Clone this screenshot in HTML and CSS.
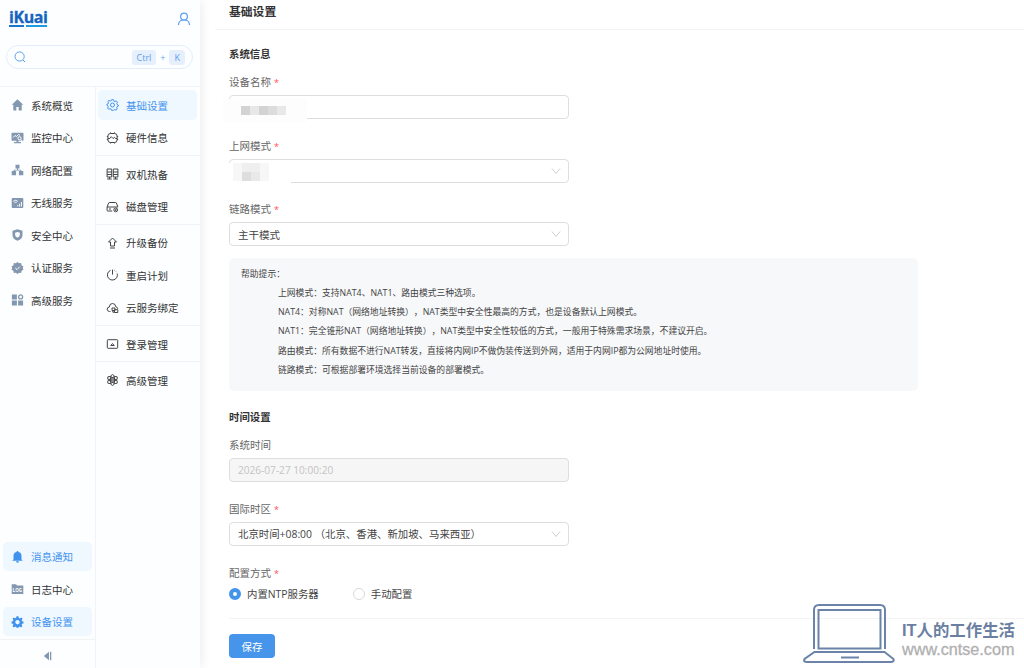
FILE: index.html
```html
<!DOCTYPE html>
<html lang="zh-CN">
<head>
    <meta charset="UTF-8">
    <meta name="viewport" content="width=device-width, initial-scale=1.0">
    <title>基础设置</title>
    <link rel="stylesheet" href="styles.css">
</head>
<body>
    <aside class="sidebar">
        <div class="side-head">
            <div class="brand">
                <div class="logo">iKuai</div>
                <svg class="user" viewBox="0 0 14 14"><circle cx="7" cy="4.6" r="3.4"/><path d="M1.5 13c0-3 2-5 5.500-5s5.500 2 5.500 5"/></svg>
            </div>
            <div class="search">
                <svg viewBox="0 0 12 12"><circle cx="5.600" cy="5.500" r="4.600"/><path d="M9 9l2 2"/></svg>
                <kbd>Ctrl</kbd><span>+</span><kbd>K</kbd>
            </div>
        </div>
        <div class="side-body">
            <nav class="menu main-menu">
                <a class="item"><svg viewBox="0 0 12 12"><path d="M6 .3L.3 5.800h1.500V11.500h3V8h2.400v3.500h3V5.800h1.500z"/></svg>系统概览</a>
                <a class="item"><svg viewBox="0 0 12 12"><path d="M.8.800h10.400q.8 0 .8.800v6.400q0 .8-.8.800H7v1.200h2.500v1.200h-7V10H5V8.800H.8Q0 8.800 0 8V1.600Q0 .8.800.8z"/><path class="cut" d="M1.500 5.500l2-2 1.500 1 2-2 1.500.8"/><circle class="cut" cx="8" cy="6.200" r="1.600"/><path class="cut" d="M9.200 7.500l1.800 1.800"/></svg>监控中心</a>
                <a class="item"><svg viewBox="0 0 12 12"><path d="M4 .7h4v3.800H4zM.2 7h4.400v4.200H.2zM7.400 7h4.400v4.200H7.400zM5.500 4.500h1v1.200h3.300V7h-1v-.4H3.200V7h-1V5.700h3.300z"/></svg>网络配置</a>
                <a class="item"><svg viewBox="0 0 12 12"><rect x=".2" y="1" width="11.600" height="10" rx="1"/><path class="cut" d="M1.800 4.300q2.200-2 4.400 0M3 5.700q1-.9 2 0M6.300 9.500V8M8.100 9.500V6.800M9.900 9.500V5"/></svg>无线服务</a>
                <a class="item"><svg viewBox="0 0 12 12"><path d="M6 .3l5 1.500v4.200q0 4-5 5.700Q1 10 1 6V1.800z"/><path class="hole" d="M6 3l2.400.800v2q0 2-2.400 3-2.400-1-2.400-3v-2z"/></svg>安全中心</a>
                <a class="item"><svg viewBox="0 0 12 12"><path d="M6 0l1.600 1.300 2.100-.2.300 2.100L12 4.400 11.200 6l.8 1.800-1.900 1-.4 2.100-2.100-.2L6 12l-1.600-1.300-2.100.2-.4-2.100L0 7.800.8 6 0 4.400l2-1.200.3-2.100 2.100.2z"/><path class="cut" d="M3.800 6l1.700 1.600 2.800-3"/></svg>认证服务</a>
                <a class="item"><svg viewBox="0 0 12 12"><path d="M.4.400h5v5h-5zM.4 6.600h5v5h-5zM6.600 6.600h5v5h-5z"/><circle class="ring" cx="9.100" cy="2.900" r="2"/></svg>高级服务</a>
                <div class="spacer"></div>
                <a class="item active"><svg viewBox="0 0 12 12"><path d="M6 0q1 0 1 1 3 .7 3 4v3.500l1.300 1.300H.7L2 8.500V5q0-3.300 3-4 0-1 1-1zM4.500 10.300h3Q7.300 11.800 6 11.800t-1.500-1.500z"/></svg>消息通知</a>
                <a class="item"><svg viewBox="0 0 12 12"><path d="M.2 1.200h4.300l1 1.300h6.300v8.600H.2z"/><text x="1.100" y="9">LOG</text></svg>日志中心</a>
                <a class="item active"><svg viewBox="0 0 12 12"><path fill-rule="evenodd" d="M5 .3h2l.3 1.600 1.100.5L9.800 1.500l1.300 1.300-.9 1.400.4 1.100 1.400.2v1.900l-1.400.3-.5 1.100.8 1.300-1.300 1.300-1.300-.8-1 .4L7 11.700H5L4.700 11 3.700 10.600l-1.400.8L1 10.100l.9-1.300-.5-1.100L0 7.400V5.500l1.400-.3.500-1.100L1 2.700l1.300-1.300 1.300.9 1.100-.5zM6 4a2.200 2.200 0 1 0 .01 0z"/></svg>设备设置</a>
                <div class="collapse"><svg viewBox="0 0 10 10"><path d="M6 .800v8.400L.8 5zM7 .8h1.300v8.400H7z"/></svg></div>
            </nav>
            <nav class="menu sub-menu">
                <div class="group">
                    <a class="item active"><svg viewBox="0 0 12 12"><path d="M5 .7h2l.4 1.400 1 .5 1.400-.7 1.200 1.300-.7 1.300.4 1 1 .4v1.300l-1.200.5-.4 1 .7 1.300-1.300 1.200-1.200-.7-1 .4L7 11.300H5L4.600 10l-1-.4-1.400.7L1.100 9l.7-1.300-.4-1-1-.4V5.200l1.200-.4.400-1-.7-1.300L2.500 1.400l1.200.7 1-.4z"/><circle cx="6" cy="6" r="2"/></svg>基础设置</a>
                    <a class="item"><svg viewBox="0 0 12 12"><rect x="1.400" y="1.500" width="9.200" height="9" rx="2.500"/><path d="M4 .4v1M8 .4v1M4 10.500v1M8 10.500v1M.3 4.500h1M.3 7.500h1M10.700 4.500h1M10.700 7.500h1M1.500 6.500h1.800l1.500-1.800 1.800 1.800L8 5.300l1 1.200h1.600"/></svg>硬件信息</a>
                </div>
                <div class="group">
                    <a class="item"><svg viewBox="0 0 12 12"><path d="M.6 1h4.600v8H.6zM6.800 1h4.600v8H6.800zM.6 4h4.600M.6 6.500h4.600M6.800 4h4.600M6.800 6.500h4.600M3 9v2M9 9v2M.6 11h4.600M6.800 11h4.600"/></svg>双机热备</a>
                    <a class="item"><svg viewBox="0 0 12 12"><path d="M.6 6l1.500-4q.2-.5.800-.5h6.200q.6 0 .8.500L11.400 6M.6 6h10.800M.6 6v3.500q0 .5.500.5h4.600M2.500 8h2"/><circle cx="9.200" cy="8.900" r="1.900"/><circle cx="9.200" cy="8.900" r=".6"/></svg>磁盘管理</a>
                </div>
                <div class="group">
                    <a class="item"><svg viewBox="0 0 12 12"><path d="M6 1L2 5h2v4h4V5h2zM3.500 11h5"/></svg>升级备份</a>
                    <a class="item"><svg viewBox="0 0 12 12"><path d="M4 1.400a5 5 0 1 0 6.700 3.200M6 .6v5M8 1.300l.5.300M9.600 2.600l.4.500"/></svg>重启计划</a>
                    <a class="item"><svg viewBox="0 0 12 12"><path d="M4 9.500H3Q.7 9.300.7 7.200T2.800 5Q3 1.500 6 1.500t3.300 3.300q1.800.3 2 2"/><path d="M5.500 6h3v2.500h-3zM8 7.700h3.300v2.800H8zM6.300 8.500v1.700H8"/></svg>云服务绑定</a>
                </div>
                <div class="group">
                    <a class="item"><svg viewBox="0 0 12 12"><rect x=".8" y="1.700" width="10.400" height="8.600" rx=".8"/><path d="M4.300 7.500l1.700-2 1.700 2z"/></svg>登录管理</a>
                </div>
                <div class="group">
                    <a class="item"><svg viewBox="0 0 12 12"><ellipse cx="6" cy="6" rx="2.100" ry="5.400"/><ellipse cx="6" cy="6" rx="2.100" ry="5.400" transform="rotate(60 6 6)"/><ellipse cx="6" cy="6" rx="2.100" ry="5.400" transform="rotate(120 6 6)"/><circle cx="6" cy="6" r="1"/></svg>高级管理</a>
                </div>
            </nav>
        </div>
    </aside>

    <main class="content">
        <h1>基础设置</h1>
        <form>
            <h2>系统信息</h2>
            <div class="field">
                <label class="required">设备名称</label>
                <div class="control masked">
                    <div class="mask mask-name"><i></i><i></i><i></i><i></i><i></i></div>
                </div>
            </div>
            <div class="field">
                <label class="required">上网模式</label>
                <div class="control masked">
                    <div class="mask mask-mode"><i></i><i></i><i></i><i></i><i></i><i></i><i></i><i></i></div>
                    <svg class="arrow" viewBox="0 0 10 8"><path d="M1 1.500l4 5 4-5"/></svg>
                </div>
            </div>
            <div class="field">
                <label class="required">链路模式</label>
                <div class="control">主干模式<svg class="arrow" viewBox="0 0 10 8"><path d="M1 1.500l4 5 4-5"/></svg></div>
            </div>
            <div class="help">
                <p>帮助提示：</p>
                <ul>
                    <li>上网模式：支持NAT4、NAT1、路由模式三种选项。</li>
                    <li>NAT4：对称NAT（网络地址转换），NAT类型中安全性最高的方式，也是设备默认上网模式。</li>
                    <li>NAT1：完全锥形NAT（网络地址转换），NAT类型中安全性较低的方式，一般用于特殊需求场景，不建议开启。</li>
                    <li>路由模式：所有数据不进行NAT转发，直接将内网IP不做伪装传送到外网，适用于内网IP都为公网地址时使用。</li>
                    <li>链路模式：可根据部署环境选择当前设备的部署模式。</li>
                </ul>
            </div>
            <h2>时间设置</h2>
            <div class="field">
                <label>系统时间</label>
                <div class="control disabled">2026-07-27 10:00:20</div>
            </div>
            <div class="field">
                <label class="required">国际时区</label>
                <div class="control"><span class="zone">北京时间+08:00 （北京、香港、新加坡、马来西亚）</span><svg class="arrow" viewBox="0 0 10 8"><path d="M1 1.500l4 5 4-5"/></svg></div>
            </div>
            <div class="field">
                <label class="required">配置方式</label>
                <div class="radios">
                    <span class="radio checked">内置NTP服务器</span>
                    <span class="radio">手动配置</span>
                </div>
            </div>
            <div class="actions">
                <button type="button">保存</button>
            </div>
        </form>
    </main>

    <div class="watermark">
        <svg viewBox="0 0 92 60">
            <path d="M11 45V6q0-5 5-5h61q5 0 5 5v39"/>
            <path d="M15.500 6h62v38.500h-62z"/>
            <path d="M11.500 48h70l9 7q1 3-3 3H4q-4 0-2.500-3z"/>
            <path d="M38 53.500h18"/>
        </svg>
        <div>
            <div class="wm-name">IT人的工作生活</div>
            <div class="wm-url">www.cntse.com</div>
        </div>
    </div>
</body>
</html>
```

FILE: styles.css
```css
*,
*::before,
*::after {
    box-sizing: border-box;
}

body {
    margin: 0;
    height: 668px;
    display: flex;
    overflow: hidden;
    position: relative;
    background: #fff;
    color: #444;
    font-family: "Open Sans", "Noto Sans CJK SC", sans-serif;
    font-size: 10.5px;
    text-spacing-trim: space-all;
}

h1, h2, p, ul {
    margin: 0;
    padding: 0;
}

/* sidebar */
.sidebar {
    width: 200px;
    flex: none;
    display: flex;
    flex-direction: column;
    background: #fcfeff;
    box-shadow: 2px 0 10px rgba(0, 0, 0, 0.07);
}

.side-head {
    height: 87px;
    border-bottom: 1px solid #f1f4f7;
}

.brand {
    display: flex;
    justify-content: space-between;
    align-items: flex-start;
    height: 45px;
    padding: 10px 9px 0;
}

.logo {
    position: relative;
    height: 18px;
    color: #1565c0;
    font: bold 16px/15px "Open Sans", sans-serif;
    letter-spacing: -0.4px;
    -webkit-text-stroke: 0.3px #1565c0;
}

.logo::after {
    content: "";
    position: absolute;
    left: 0;
    top: 15px;
    width: 38px;
    height: 2px;
    background: linear-gradient(90deg, #1976cb 15px, #fcfeff 15px, #fcfeff 17px, #1e9be0 17px);
}

.user {
    width: 14px;
    height: 14px;
    margin: 2px 0 0;
    fill: none;
    stroke: #5e9eee;
    stroke-width: 1.2;
}

.search {
    display: flex;
    align-items: center;
    width: 187px;
    height: 24px;
    margin-left: 6px;
    padding: 0 7px;
    border: 1px solid #e4eefb;
    border-radius: 12px;
    color: #5e9eee;
    font-size: 9px;
}

.search svg {
    width: 12px;
    height: 12px;
    margin-right: auto;
    fill: none;
    stroke: #5e9eee;
}

.search span {
    margin: 0 4px;
}

kbd {
    height: 15px;
    padding: 0 5px;
    border-radius: 3px;
    background: #e6f0fc;
    font: 9px/16px "Open Sans", sans-serif;
}

.side-body {
    flex: 1;
    display: flex;
}

.menu {
    display: flex;
    flex-direction: column;
}

.main-menu {
    width: 96px;
    padding-top: 3px;
    gap: 3px;
    border-right: 1px solid #f1f4f7;
}

.sub-menu {
    flex: 1;
}

.item {
    display: flex;
    align-items: center;
    flex: none;
    height: 29.5px;
    margin: 0 3px;
    padding: 1px 0 0 8px;
    border-radius: 5px;
    color: #333;
    white-space: nowrap;
}

.sub-menu .item {
    margin-left: 2px;
}

.item svg {
    width: 13px;
    height: 12px;
    margin-right: 7px;
    overflow: visible;
}

.main-menu .item svg {
    fill: #8497b0;
}

.item .cut {
    fill: none;
    stroke: #fff;
    stroke-width: 1;
}

.item .hole {
    fill: #fcfeff;
}

.item .ring {
    fill: none;
    stroke: #8497b0;
    stroke-width: 1.3;
}

.item text {
    fill: #fff;
    font: bold 4.5px "Open Sans", sans-serif;
}

.sub-menu .item svg {
    fill: none;
    stroke: #444;
    stroke-width: 1;
}

.item.active {
    background: #eff7ff;
    color: #4394ee;
}

.main-menu .item.active svg {
    fill: #3f93ee;
}

.sub-menu .item.active svg {
    stroke: #4394ee;
}

.spacer {
    flex: 1;
}

.collapse {
    display: flex;
    flex: none;
    height: 29px;
    align-items: center;
    justify-content: center;
    padding-top: 4px;
    border-top: 1px solid #f1f4f7;
}

.collapse svg {
    width: 10px;
    height: 10px;
    fill: #8497b0;
}

.group {
    display: flex;
    flex-direction: column;
    gap: 3px;
    padding: 3px 0 2.8px;
    border-bottom: 1px solid #f0f3f6;
}

.group:last-child {
    border-bottom: none;
}

/* page */
.content {
    flex: 1;
    margin-left: 15px;
}

h1 {
    height: 30px;
    padding-left: 14px;
    border-bottom: 1px solid #f4f4f5;
    color: #333;
    font-size: 11.8px;
    line-height: 23px;
    font-weight: 600;
}

form {
    padding: 17px 0 0 14px;
}

h2 {
    height: 14px;
    margin-bottom: 13px;
    color: #333;
    font-size: 10.4px;
    line-height: 14px;
    font-weight: bold;
}

.field {
    width: 340px;
    margin-bottom: 18.6px;
}

label {
    display: block;
    height: 16px;
    margin-bottom: 5px;
    color: #666;
    line-height: 16px;
}

.required::after {
    content: "*";
    margin-left: 3px;
    color: #ff5050;
    font-size: 9px;
    line-height: 1;
}

.control {
    display: flex;
    align-items: center;
    position: relative;
    height: 24px;
    padding: 0 7px 0 8px;
    border: 1px solid #dedede;
    border-radius: 4px;
    color: #444;
}

.zone {
    font-size: 10.4px;
    white-space: pre;
}

.arrow {
    width: 10px;
    height: 8px;
    margin-left: auto;
    fill: none;
    stroke: #d0d0d0;
}

.disabled {
    background: #f6f6f6;
    color: #c4c4c4;
    font-size: 10.1px;
}

/* mosaic over private values */
.mask {
    position: absolute;
    display: grid;
    background: #fff;
}

.mask-name {
    left: -7px;
    top: 3px;
    width: 84px;
    height: 23px;
    padding: 7px 0 7px 18px;
    grid-template-columns: repeat(5, 9px);
    background: #fdfdfd;
}

.mask-name i {
    background: #dcdcdc;
}

.mask-name i:nth-child(1),
.mask-name i:nth-child(3) {
    background: #d3d3d3;
}

.mask-name i:nth-child(2),
.mask-name i:nth-child(5) {
    background: #e8e8e8;
}

.mask-mode {
    left: -6px;
    top: 3px;
    width: 67px;
    height: 20px;
    padding: 0 0 2px 9px;
    grid-template-columns: repeat(4, 9px);
    grid-auto-rows: 9px;
}

.mask-mode i {
    background: #f7f7f7;
}

.mask-mode i:nth-child(2),
.mask-mode i:nth-child(3) {
    background: #efefef;
}

.mask-mode i:nth-child(6) {
    background: #dedede;
}

.mask-mode i:nth-child(7) {
    background: #e9e9e9;
}

.help {
    width: 689px;
    height: 133px;
    margin: -7px 0 19.6px;
    padding: 7px 12px;
    border-radius: 5px;
    background: #f7f8fa;
    color: #444;
    font-size: 8.8px;
    line-height: 19.2px;
    white-space: nowrap;
}

.help ul {
    list-style: none;
    padding-left: 37px;
}

.radios {
    display: flex;
    gap: 34px;
    height: 16px;
    font-size: 10.4px;
    line-height: 16px;
}

.radio {
    display: flex;
    align-items: center;
    gap: 6px;
}

.radio::before {
    content: "";
    width: 12px;
    height: 12px;
    border: 1px solid #d9d9d9;
    border-radius: 50%;
}

.radio.checked::before {
    border: 4px solid #4394ea;
}

.actions {
    margin-top: -2px;
    padding-top: 15px;
    border-top: 1px solid #f4f4f5;
}

button {
    width: 46px;
    height: 24px;
    padding: 0;
    border: none;
    border-radius: 4px;
    background: #4795eb;
    color: #fff;
    font: inherit;
}

/* corner signature */
.watermark {
    position: absolute;
    left: 803px;
    top: 604px;
    display: flex;
    gap: 7px;
}

.watermark svg {
    width: 92px;
    height: 60px;
    fill: none;
    stroke: #6b83a8;
    stroke-width: 2;
}

.wm-name {
    margin-top: 15px;
    color: #6b7fa3;
    font: bold 16.4px/22px "Liberation Sans", "Noto Sans CJK SC", sans-serif;
    white-space: nowrap;
}

.wm-url {
    color: #b0b0b0;
    font: 16.2px/17px "Liberation Sans", sans-serif;
    -webkit-text-stroke: 0.3px #b0b0b0;
}
```
